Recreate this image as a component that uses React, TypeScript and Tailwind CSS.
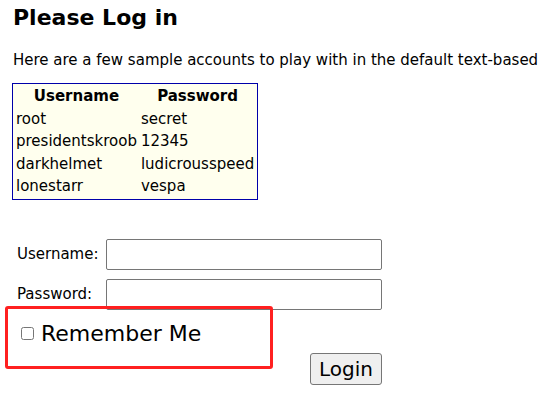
const accounts = [
  ['root', 'secret'],
  ['presidentskroob', '12345'],
  ['darkhelmet', 'ludicrousspeed'],
  ['lonestarr', 'vespa'],
];

export default function App() {
  return (
    <div className="relative w-[540px] h-[420px] overflow-hidden bg-white text-black font-['DejaVu_Sans',Verdana,sans-serif]">
      <div className="pl-[13px] pt-[4px]">
        <h1 className="text-[22px] font-bold leading-[28px]">Please Log in</h1>
        <p className="mt-[19px] text-[15px] leading-[18px] whitespace-nowrap">
          Here are a few sample accounts to play with in the default text-based
        </p>
        <table className="mt-[14px] -ml-[1px] border border-[#0000aa] bg-[#ffffee] text-[15px] border-separate border-spacing-[2px]">
          <thead>
            <tr>
              <th className="px-[1px] leading-[20.5px] text-center">Username</th>
              <th className="px-[1px] leading-[20.5px] text-center">Password</th>
            </tr>
          </thead>
          <tbody>
            {accounts.map(([u, p]) => (
              <tr key={u}>
                <td className="px-[1px] leading-[20.5px]">{u}</td>
                <td className="px-[1px] leading-[20.5px]">{p}</td>
              </tr>
            ))}
          </tbody>
        </table>
      </div>

      <div className="mt-[39px] pl-[17px] w-[382px] text-[15px]">
        <div className="flex items-center">
          <label className="w-[89px]">Username:</label>
          <input type="text" className="w-[276px] h-[31px] border border-[#767676] rounded-[2px]" />
        </div>
        <div className="flex items-center mt-[9px]">
          <label className="w-[89px]">Password:</label>
          <input type="password" className="w-[276px] h-[31px] border border-[#767676] rounded-[2px]" />
        </div>
        <div className="flex items-center mt-[11px] ml-[4px]">
          <input type="checkbox" className="w-[13px] h-[13px]" />
          <span className="ml-[7px] text-[22px] leading-[26px]">Remember Me</span>
        </div>
        <div className="flex justify-end mt-[6px]">
          <button className="h-[32px] px-[8px] text-[20px] leading-[24px] bg-[#efefef] border border-[#767676] rounded-[3px]">
            Login
          </button>
        </div>
      </div>

      <div className="absolute left-[5px] top-[306px] w-[268px] h-[63px] border-[3px] border-[#ff2020] rounded-[3px]" />
    </div>
  );
}
